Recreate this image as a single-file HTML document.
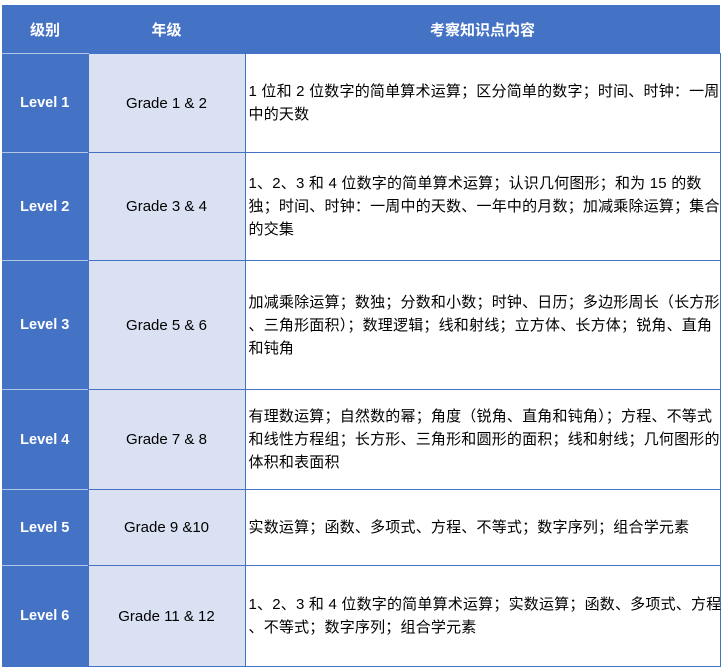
<!DOCTYPE html>
<html><head><meta charset="utf-8"><style>
body{margin:0;background:#fff;width:724px;height:669px;overflow:hidden;font-family:"Liberation Sans","Noto Sans CJK SC",sans-serif;}
.t{position:absolute;left:2px;top:5px;width:718px;border-collapse:collapse;table-layout:fixed}
td,th{padding:0;font-size:14px;}
th{background:#4472c4;color:#fff;height:48px;font-weight:bold;font-size:15px;}
td.l{background:#4472c4;color:#fff;font-weight:bold;text-align:center;border-top:1px solid #b4c6e7;font-size:14.5px;}
td.g{background:#d9e1f2;color:#000;text-align:center;border:1px solid #4472c4;font-size:15px;}
td.c{border:1px solid #4472c4;padding-left:3px;line-height:23px;color:#000;font-size:15px;letter-spacing:0.2px;white-space:nowrap;}
</style></head><body>
<table class="t">
<colgroup><col style="width:86px"><col style="width:157px"><col style="width:475px"></colgroup>
<tr><th>级别</th><th>年级</th><th>考察知识点内容</th></tr>
<tr style="height:99px"><td class="l">Level 1</td><td class="g">Grade 1 &amp; 2</td><td class="c">1 位和 2 位数字的简单算术运算；区分简单的数字；时间、时钟：一周<br>中的天数</td></tr>
<tr style="height:108px"><td class="l">Level 2</td><td class="g">Grade 3 &amp; 4</td><td class="c">1、2、3 和 4 位数字的简单算术运算；认识几何图形；和为 15 的数<br>独；时间、时钟：一周中的天数、一年中的月数；加减乘除运算；集合<br>的交集</td></tr>
<tr style="height:129px"><td class="l">Level 3</td><td class="g">Grade 5 &amp; 6</td><td class="c">加减乘除运算；数独；分数和小数；时钟、日历；多边形周长（长方形<br>、三角形面积）；数理逻辑；线和射线；立方体、长方体；锐角、直角<br>和钝角</td></tr>
<tr style="height:100px"><td class="l">Level 4</td><td class="g">Grade 7 &amp; 8</td><td class="c">有理数运算；自然数的幂；角度（锐角、直角和钝角）；方程、不等式<br>和线性方程组；长方形、三角形和圆形的面积；线和射线；几何图形的<br>体积和表面积</td></tr>
<tr style="height:76px"><td class="l">Level 5</td><td class="g">Grade 9 &amp;10</td><td class="c">实数运算；函数、多项式、方程、不等式；数字序列；组合学元素</td></tr>
<tr style="height:101px"><td class="l">Level 6</td><td class="g">Grade 11 &amp; 12</td><td class="c">1、2、3 和 4 位数字的简单算术运算；实数运算；函数、多项式、方程<br>、不等式；数字序列；组合学元素</td></tr>
</table>
</body></html>
